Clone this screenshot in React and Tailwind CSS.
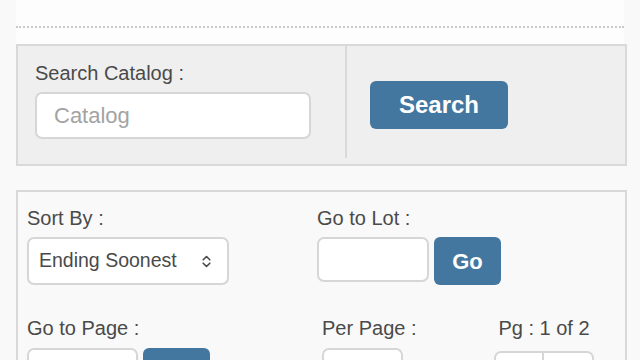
import React from 'react'

const font = { fontFamily: '"Liberation Sans", Arial, Helvetica, sans-serif' }

function UpDown() {
  return (
    <svg width="9" height="13" viewBox="0 0 9 13" fill="none" className="shrink-0">
      <path d="M1.2 4.8 L4.5 1.5 L7.8 4.8" stroke="#4a4a4a" strokeWidth="1.6" strokeLinecap="round" strokeLinejoin="round" />
      <path d="M1.2 8.2 L4.5 11.5 L7.8 8.2" stroke="#4a4a4a" strokeWidth="1.6" strokeLinecap="round" strokeLinejoin="round" />
    </svg>
  )
}

function Label({ children, className = '' }) {
  return <div className={`text-[20px] leading-[23px] text-[#4a4a4a] ${className}`}>{children}</div>
}

function BlueButton({ children, className = '' }) {
  return (
    <button className={`flex items-center justify-center rounded-[6px] bg-[#44779f] font-bold text-white ${className}`}>
      {children}
    </button>
  )
}

export default function App() {
  return (
    <div style={font} className="min-h-screen bg-[#f9f9f9] pl-4 pr-[13px]">
      <div className="mr-[3px] h-[44px] bg-[#fdfdfd] pt-[26px]">
        <div className="border-b-2 border-dotted border-[#c9c9c9]" />
      </div>

      {/* search catalog */}
      <div className="flex border-2 border-[#d9d9d9] bg-[#efefef] pb-[6px]">
        <div className="w-[329px] border-r-2 border-[#d9d9d9] pl-[17px] pt-4 pb-[19px]">
          <Label>Search Catalog :</Label>
          <div className="mt-[7px] flex h-[47px] w-[276px] items-center rounded-[7px] border-2 border-[#d6d6d6] bg-white pl-[17px] text-[22px] text-[#a3a3a3]">
            Catalog
          </div>
        </div>
        <div className="pl-[23px] pt-[35px]">
          <BlueButton className="h-[48px] w-[138px] text-[24px]">Search</BlueButton>
        </div>
      </div>

      {/* sort / paging */}
      <div className="mt-6 h-[200px] border-2 border-[#d9d9d9] bg-[#f9f9f9] pl-[9px] pt-[15px]">
        <div className="flex">
          <div className="w-[290px]">
            <Label>Sort By :</Label>
            <div className="mt-[7px] flex h-[48px] w-[202px] items-center justify-between rounded-[7px] border-2 border-[#d6d6d6] bg-white pl-[10px] pr-[16px] text-[19.5px] text-[#4a4a4a]">
              <span>Ending Soonest</span>
              <UpDown />
            </div>
          </div>
          <div>
            <Label>Go to Lot :</Label>
            <div className="mt-[7px] flex items-start gap-[5px]">
              <div className="h-[45px] w-[112px] rounded-[7px] border-2 border-[#d6d6d6] bg-white" />
              <BlueButton className="h-[48px] w-[67px] text-[22px]">Go</BlueButton>
            </div>
          </div>
        </div>

        <div className="mt-[32px] flex">
          <div className="w-[295px]">
            <Label>Go to Page :</Label>
            <div className="mt-[8px] flex items-start gap-[5px]">
              <div className="h-[45px] w-[111px] rounded-[7px] border-2 border-[#d6d6d6] bg-white" />
              <BlueButton className="h-[48px] w-[67px] text-[22px]">Go</BlueButton>
            </div>
          </div>
          <div className="w-[172px]">
            <Label>Per Page :</Label>
            <div className="mt-[8px] h-[45px] w-[81px] rounded-[7px] border-2 border-[#d6d6d6] bg-white" />
          </div>
          <div className="flex w-[100px] flex-col items-center">
            <Label>Pg : 1 of 2</Label>
            <div className="mt-[11px] flex h-[45px] w-[100px] overflow-hidden rounded-[7px] border-2 border-[#d6d6d6] bg-white">
              <div className="w-1/2 border-r-2 border-[#d6d6d6]" />
              <div className="w-1/2" />
            </div>
          </div>
        </div>
      </div>
    </div>
  )
}
